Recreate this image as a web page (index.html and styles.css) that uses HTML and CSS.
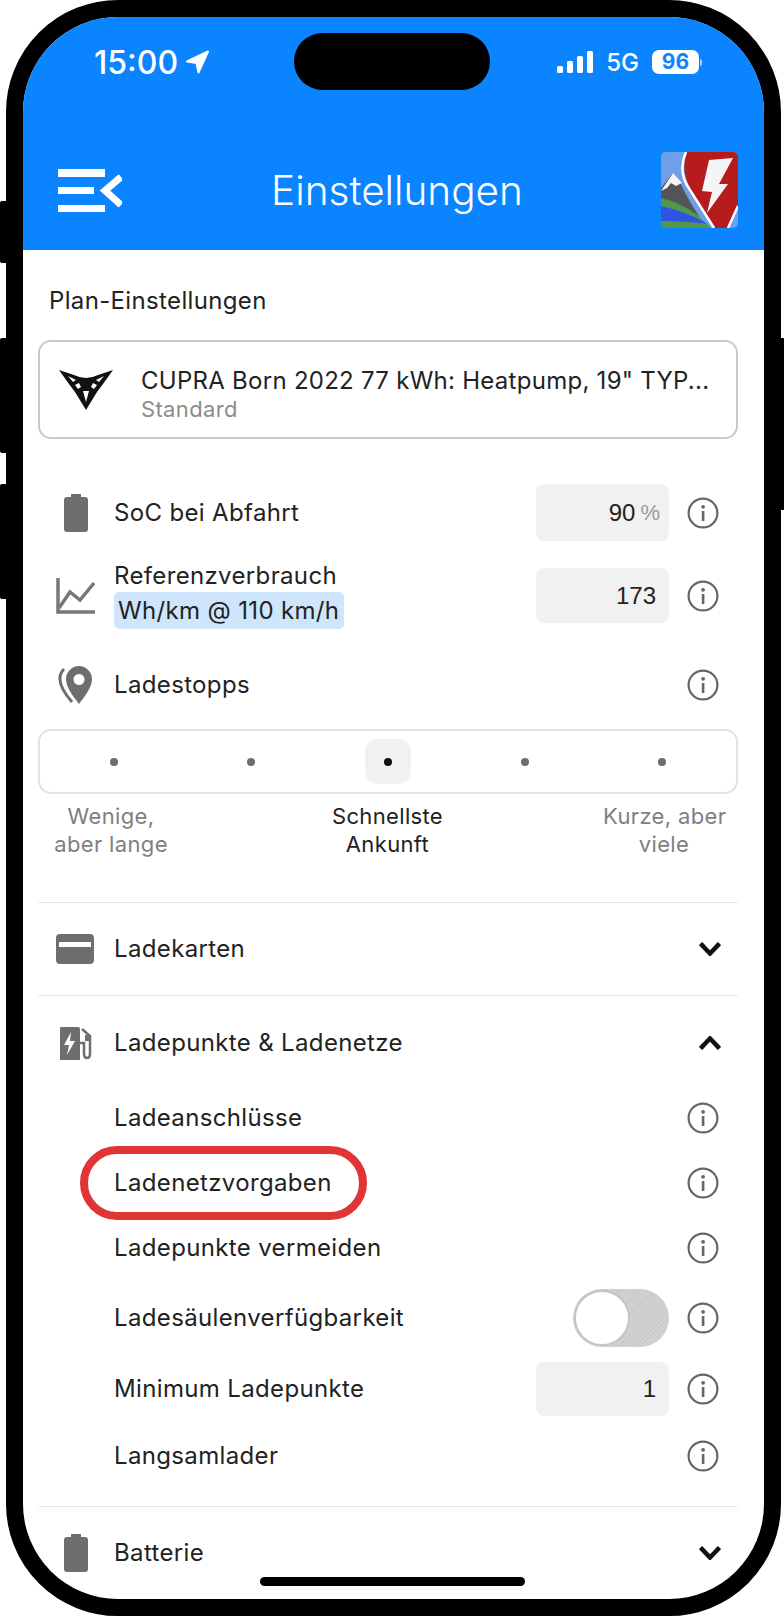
FILE: index.html
```html
<!DOCTYPE html>
<html lang="de">
<head>
  <meta charset="UTF-8">
  <title>Einstellungen</title>
  <link rel="stylesheet" href="styles.css">
</head>
<body>

  <div class="phone">
    <span class="side-btn btn-mute"></span>
    <span class="side-btn btn-up"></span>
    <span class="side-btn btn-down"></span>
    <span class="side-btn btn-power"></span>

    <div class="screen">
      <div class="island"></div>

      <!-- Blue header with status bar -->
      <header class="header">
        <div class="status">
          <div class="status-left">
            <span class="time">15:00</span>
            <svg class="loc" viewBox="0 0 25 24"><path d="M23 1.5 L2 11.5 L11.5 13 L13.5 22.5 Z" fill="#fff" stroke="#fff" stroke-width="2" stroke-linejoin="round"/></svg>
          </div>
          <div class="status-right">
            <svg class="signal" viewBox="0 0 36 22" fill="#fff">
              <rect x="0" y="15" width="6" height="7" rx="1.5"/>
              <rect x="10" y="10" width="6" height="12" rx="1.5"/>
              <rect x="20" y="5" width="6" height="17" rx="1.5"/>
              <rect x="30" y="0" width="6" height="22" rx="1.5"/>
            </svg>
            <span class="net">5G</span>
            <span class="batt">96</span>
            <span class="batt-nub"></span>
          </div>
        </div>
        <div class="titlebar">
          <svg class="menu" viewBox="0 0 64 43" fill="#fff">
            <rect x="0" y="0" width="47" height="8"/>
            <rect x="0" y="18" width="36" height="7"/>
            <rect x="0" y="36" width="47" height="7"/>
            <path d="M63 8 L47 21.5 L63 36" fill="none" stroke="#fff" stroke-width="7"/>
          </svg>
          <h1 class="title">Einstellungen</h1>
          <svg class="logo" viewBox="0 0 77 76">
            <rect width="77" height="76" fill="#6f9fe6"/>
            <path d="M0 36 L12 21 L20 32 Q26 46 38 64 L0 48 Z" fill="#555"/>
            <path d="M0 39 L12 21 L21 31 L15 34 L10 31 L6 36 Z" fill="#f4f4f4"/>
            <path d="M0 46 Q18 50 38 64 L42 69 Q18 58 0 54 Z" fill="#4f9a4a"/>
            <path d="M0 54 Q20 58 42 69 L46 72 Q20 71 0 69 Z" fill="#2f55e0"/>
            <path d="M0 69 Q24 69 46 72 L50 76 H0 Z" fill="#4f9a4a"/>
            <path d="M26 0 H77 V54 L67 76 H54 L30 38 Q19 18 26 0 Z" fill="#b71c1c"/>
            <path d="M25 0 Q16 20 29 38 L53 76" fill="none" stroke="#fff" stroke-width="2.5"/>
            <path d="M77 54 L67 76" fill="none" stroke="#fff" stroke-width="2.5"/>
            <path d="M48 8 L72 6 L58 32 L67 32 L46 61 L51 40 L41 39 Z" fill="#f5f5f5"/>
          </svg>
        </div>
      </header>

      <main class="content">
        <h2 class="plan-title">Plan-Einstellungen</h2>

        <div class="car-card">
          <svg class="car-logo" viewBox="0 0 54 40">
            <path fill="#111" d="M0 0 L15 5 Q27 11 39 5 L54 0 L44 14 L38 22 L27 40 L16 22 L10 14 Z"/>
            <path fill="#fff" d="M9 6 L17 10 L14 12 Z M45 6 L37 10 L40 12 Z M24 21 L30 21 L27 32 Z"/>
            <path fill="#fff" d="M16 15 L20 13 L22 17 L19 19 Z M38 15 L34 13 L32 17 L35 19 Z"/>
          </svg>
          <div class="car-text">
            <div class="car-name">CUPRA Born 2022 77 kWh: Heatpump, 19" TYP...</div>
            <div class="car-sub">Standard</div>
          </div>
        </div>

        <div class="row row-soc">
          <span class="row-icon">
            <svg class="ic-batt" viewBox="0 0 24 38"><path fill="#6e6e6e" d="M7 0 H17 V3 H21 Q24 3 24 6 V35 Q24 38 21 38 H3 Q0 38 0 35 V6 Q0 3 3 3 H7 Z"/></svg>
          </span>
          <span class="row-label">SoC bei Abfahrt</span>
          <span class="num-input with-unit">90<span class="unit">%</span></span>
          <svg class="info" viewBox="0 0 32 32"><use href="#i-info"/></svg>
        </div>

        <div class="row row-ref">
          <span class="row-icon">
            <svg class="ic-chart" viewBox="0 0 39 36" fill="none" stroke="#777" stroke-width="3.5">
              <path d="M2 0 V34 H39"/>
              <path d="M3 30 L14 14 L24 22 L38 5"/>
            </svg>
          </span>
          <span class="row-label ref-label">
            <span>Referenzverbrauch</span>
            <span class="mark">Wh/km @ 110 km/h</span>
          </span>
          <span class="num-input">173</span>
          <svg class="info" viewBox="0 0 32 32"><use href="#i-info"/></svg>
        </div>

        <div class="row row-stops">
          <span class="row-icon">
            <svg class="ic-pin" viewBox="0 0 34 38">
              <path fill="#6e6e6e" fill-rule="evenodd" d="M21 0 C28 0 34 6 34 13 C34 22 26 31 21 38 C16 31 8 22 8 13 C8 6 14 0 21 0 Z M21 8 A5.5 5.5 0 1 0 21 19 A5.5 5.5 0 1 0 21 8 Z"/>
              <path fill="none" stroke="#6e6e6e" stroke-width="3" d="M6 3 C-1 10 0 20 14 36"/>
            </svg>
          </span>
          <span class="row-label">Ladestopps</span>
          <svg class="info" viewBox="0 0 32 32"><use href="#i-info"/></svg>
        </div>

        <div class="stops-picker">
          <span class="stop"><i></i></span>
          <span class="stop"><i></i></span>
          <span class="stop active"><i></i></span>
          <span class="stop"><i></i></span>
          <span class="stop"><i></i></span>
        </div>
        <div class="stops-labels">
          <span>Wenige,<br>aber lange</span>
          <span class="current">Schnellste<br>Ankunft</span>
          <span>Kurze, aber<br>viele</span>
        </div>

        <section class="group group-cards">
          <div class="row group-head">
            <span class="row-icon">
              <svg class="ic-card" viewBox="0 0 38 30"><path fill="#6e6e6e" fill-rule="evenodd" d="M4 0 H34 Q38 0 38 4 V26 Q38 30 34 30 H4 Q0 30 0 26 V4 Q0 0 4 0 Z M3 8 V13 H35 V8 Z"/></svg>
            </span>
            <span class="row-label">Ladekarten</span>
            <svg class="chevron" viewBox="0 0 22 14"><path d="M1.5 1.5 L11 11.5 L20.5 1.5"/></svg>
          </div>
        </section>

        <section class="group group-points">
          <div class="row group-head">
            <span class="row-icon">
              <svg class="ic-plug" viewBox="0 0 33 34">
                <path fill="#6e6e6e" d="M1 1 H18 Q20 1 20 3 V34 H0 V2 Q0 1 1 1 Z"/>
                <path fill="#fff" d="M11 6 L4 19 H9 L7 29 L15 15 H10 Z"/>
                <path fill="none" stroke="#6e6e6e" stroke-width="2.5" d="M22 3 L30 10 V28 Q30 32 27 32 Q24 32 24 28 V17 H20"/>
                <rect x="25" y="9" width="5" height="6" fill="#6e6e6e"/>
              </svg>
            </span>
            <span class="row-label">Ladepunkte &amp; Ladenetze</span>
            <svg class="chevron" viewBox="0 0 22 14"><path d="M1.5 12.5 L11 2.5 L20.5 12.5"/></svg>
          </div>

          <div class="row item item-a">
            <span class="row-label">Ladeanschlüsse</span>
            <svg class="info" viewBox="0 0 32 32"><use href="#i-info"/></svg>
          </div>
          <div class="row item item-a">
            <span class="row-label">Ladenetzvorgaben</span>
            <span class="red-ring"></span>
            <svg class="info" viewBox="0 0 32 32"><use href="#i-info"/></svg>
          </div>
          <div class="row item item-a">
            <span class="row-label">Ladepunkte vermeiden</span>
            <svg class="info" viewBox="0 0 32 32"><use href="#i-info"/></svg>
          </div>
          <div class="row item item-toggle">
            <span class="row-label">Ladesäulenverfügbarkeit</span>
            <span class="toggle"><span class="knob"></span></span>
            <svg class="info" viewBox="0 0 32 32"><use href="#i-info"/></svg>
          </div>
          <div class="row item item-b">
            <span class="row-label">Minimum Ladepunkte</span>
            <span class="num-input short">1</span>
            <svg class="info" viewBox="0 0 32 32"><use href="#i-info"/></svg>
          </div>
          <div class="row item item-b">
            <span class="row-label">Langsamlader</span>
            <svg class="info" viewBox="0 0 32 32"><use href="#i-info"/></svg>
          </div>
        </section>

        <section class="group group-batt">
          <div class="row group-head">
            <span class="row-icon">
              <svg class="ic-batt" viewBox="0 0 24 38"><path fill="#6e6e6e" d="M7 0 H17 V3 H21 Q24 3 24 6 V35 Q24 38 21 38 H3 Q0 38 0 35 V6 Q0 3 3 3 H7 Z"/></svg>
            </span>
            <span class="row-label">Batterie</span>
            <svg class="chevron" viewBox="0 0 22 14"><path d="M1.5 1.5 L11 11.5 L20.5 1.5"/></svg>
          </div>
        </section>
      </main>

      <div class="home-bar"></div>
    </div>
  </div>

  <svg class="defs" width="0" height="0">
    <symbol id="i-info" viewBox="0 0 32 32">
      <circle cx="16" cy="16" r="14.4" fill="none" stroke="#666" stroke-width="2.2"/>
      <rect x="14.8" y="14" width="2.6" height="10" fill="#666"/>
      <circle cx="16.1" cy="9.8" r="1.9" fill="#666"/>
    </symbol>
  </svg>

</body>
</html>
```

FILE: styles.css
```css
* {
  box-sizing: border-box;
}

body {
  margin: 0;
  width: 784px;
  height: 1616px;
  overflow: hidden;
  background: #fff;
  font-family: Inter, "Noto Sans", sans-serif;
  color: #222;
}

.defs {
  position: absolute;
}

/* Phone frame */
.phone {
  position: relative;
  width: 775px;
  height: 1616px;
  margin-left: 6px;
  border: 17px solid #000;
  border-radius: 112px;
  background: #000;
}

.side-btn {
  position: absolute;
  width: 6px;
  background: #000;
  left: -23px;
  border-radius: 2px 0 0 2px;
}

.btn-mute { top: 184px; height: 62px; }
.btn-up { top: 321px; height: 115px; }
.btn-down { top: 467px; height: 115px; }

.btn-power {
  left: auto;
  right: -21px;
  width: 4px;
  top: 321px;
  height: 172px;
  border-radius: 0 2px 2px 0;
}

.screen {
  position: relative;
  height: 100%;
  overflow: hidden;
  background: #fff;
  border-radius: 95px;
}

.island {
  position: absolute;
  top: 16px;
  left: 271px;
  width: 196px;
  height: 57px;
  border-radius: 29px;
  background: #000;
}

/* Header */
.header {
  height: 233px;
  background: #0a84ff;
  color: #fff;
}

.status {
  display: flex;
  justify-content: space-between;
  align-items: center;
  height: 90px;
  padding: 0 62px 0 71px;
  margin-bottom: 44px;
}

.status-left,
.status-right {
  display: flex;
  align-items: center;
}

.time {
  font-size: 32px;
  font-weight: 500;
}

.loc {
  width: 25px;
  height: 24px;
  margin-left: 7px;
}

.signal {
  width: 36px;
  height: 22px;
}

.net {
  font-size: 24px;
  font-weight: 500;
  margin-left: 13px;
}

.batt {
  width: 47px;
  height: 24px;
  margin-left: 13px;
  border-radius: 7px;
  background: #fff;
  color: #0a84ff;
  font-size: 21px;
  font-weight: 700;
  line-height: 24px;
  text-align: center;
}

.batt-nub {
  width: 2px;
  height: 7px;
  margin-left: 1px;
  border-radius: 0 2px 2px 0;
  background: rgba(255, 255, 255, 0.6);
}

.titlebar {
  display: flex;
  align-items: center;
  justify-content: space-between;
  height: 78px;
  padding: 0 26px 0 35px;
}

.menu {
  width: 64px;
  height: 43px;
}

.title {
  margin: 0 0 0 11px;
  font-size: 40.5px;
  font-weight: 300;
}

.logo {
  width: 77px;
  height: 76px;
  border-radius: 5px;
}

/* Main content */
.content {
  padding: 0 26px 0 15px;
  letter-spacing: 0.35px;
}

.plan-title {
  margin: 0 0 0 11px;
  padding-top: 36px;
  font-size: 24px;
  font-weight: 400;
  line-height: 30px;
}

.car-card {
  display: flex;
  align-items: center;
  height: 99px;
  margin-top: 24px;
  padding-left: 19px;
  border: 2px solid #c9c9c9;
  border-radius: 13px;
}

.car-logo {
  flex: none;
  width: 54px;
  height: 40px;
  margin-right: 28px;
}

.car-text {
  padding-top: 10px;
}

.car-name {
  font-size: 24px;
  line-height: 29px;
  letter-spacing: 0.27px;
  white-space: nowrap;
}

.car-sub {
  font-size: 22px;
  line-height: 28px;
  color: #8c8c8c;
}

.row {
  display: flex;
  align-items: center;
  padding-right: 19px;
}

.row-icon {
  flex: none;
  display: flex;
  align-items: center;
  justify-content: center;
  width: 76px;
}

.row-label {
  flex: 1;
  font-size: 24px;
  line-height: 30px;
}

.row-soc {
  height: 57px;
  margin-top: 45px;
}

.row-ref {
  height: 55px;
  margin-top: 27px;
}

.row-stops {
  height: 40px;
  margin-top: 42px;
}

.ref-label {
  display: flex;
  flex-direction: column;
  align-items: flex-start;
  margin-top: -3px;
  line-height: 32px;
}

.mark {
  padding: 2px 5px 2px 4px;
  border-radius: 5px;
  background: #cfe5fb;
  line-height: 33px;
}

.ic-batt {
  width: 24px;
  height: 38px;
}

.ic-chart {
  width: 39px;
  height: 36px;
  margin-left: -2px;
}

.ic-pin {
  width: 34px;
  height: 38px;
  margin-left: -2px;
}

.ic-card {
  width: 38px;
  height: 30px;
  margin-left: -2px;
}

.ic-plug {
  width: 33px;
  height: 34px;
}

.num-input {
  flex: none;
  display: flex;
  align-items: center;
  justify-content: flex-end;
  align-self: stretch;
  width: 133px;
  padding-right: 13px;
  border-radius: 8px;
  background: #f1f1f1;
  font-family: "Liberation Sans", sans-serif;
  font-size: 24px;
  letter-spacing: 0;
}

.with-unit {
  padding-right: 9px;
}

.short {
  height: 54px;
  align-self: center;
}

.unit {
  margin-left: 5px;
  color: #999;
  font-size: 22px;
}

.info {
  flex: none;
  width: 32px;
  height: 32px;
  margin-left: 18px;
}

/* Charging stops picker */
.stops-picker {
  display: flex;
  align-items: center;
  height: 65px;
  margin-top: 24px;
  padding: 0 6px;
  border: 2.5px solid #e2e2e2;
  border-radius: 13px;
}

.stop {
  flex: 1;
  display: flex;
  align-items: center;
  justify-content: center;
}

.stop i {
  display: flex;
  align-items: center;
  justify-content: center;
  width: 46px;
  height: 45px;
  border-radius: 13px;
}

.stop i::after {
  content: "";
  width: 8px;
  height: 8px;
  border-radius: 50%;
  background: #6e6e6e;
}

.stop.active i {
  background: #f1f1f1;
}

.stop.active i::after {
  background: #111;
}

.stops-labels {
  display: grid;
  grid-template-columns: 122px 1fr 122px;
  margin-top: 8px;
  padding: 0 13px 0 12px;
  font-size: 22px;
  line-height: 28px;
  text-align: center;
  color: #808080;
  white-space: nowrap;
}

.stops-labels .current {
  color: #222;
}

/* Collapsible groups */
.group {
  border-top: 1px solid #e9e9e9;
}

.group-cards {
  margin-top: 44px;
}

.group-head {
  height: 89px;
  padding-top: 5px;
}

.group-cards .group-head {
  height: 92px;
  padding-top: 0;
}

.group-batt .group-head {
  height: 92px;
  padding-top: 0;
}

.group-points {
  height: 511px;
}

.chevron {
  flex: none;
  width: 22px;
  height: 14px;
  margin-right: -2px;
  fill: none;
  stroke: #111;
  stroke-width: 4.5;
}

.item {
  position: relative;
  padding-left: 76px;
}

.item-a {
  height: 65px;
}

.item-toggle {
  height: 75px;
}

.item-b {
  height: 67px;
}

.red-ring {
  position: absolute;
  left: 42px;
  top: -4px;
  width: 287px;
  height: 74px;
  border: 8px solid #e03535;
  border-radius: 37px;
}

.toggle {
  flex: none;
  display: block;
  position: relative;
  width: 96px;
  height: 58px;
  border-radius: 29px;
  background: repeating-linear-gradient(135deg, #c8c8c8 0 1px, #d2d2d2 1px 3px);
}

.knob {
  position: absolute;
  left: 1px;
  top: 1px;
  width: 56px;
  height: 56px;
  border: 2px solid #c4c4c4;
  border-radius: 50%;
  background: #fff;
}

.home-bar {
  position: absolute;
  left: 237px;
  top: 1560px;
  width: 265px;
  height: 9px;
  border-radius: 5px;
  background: #000;
}
```
